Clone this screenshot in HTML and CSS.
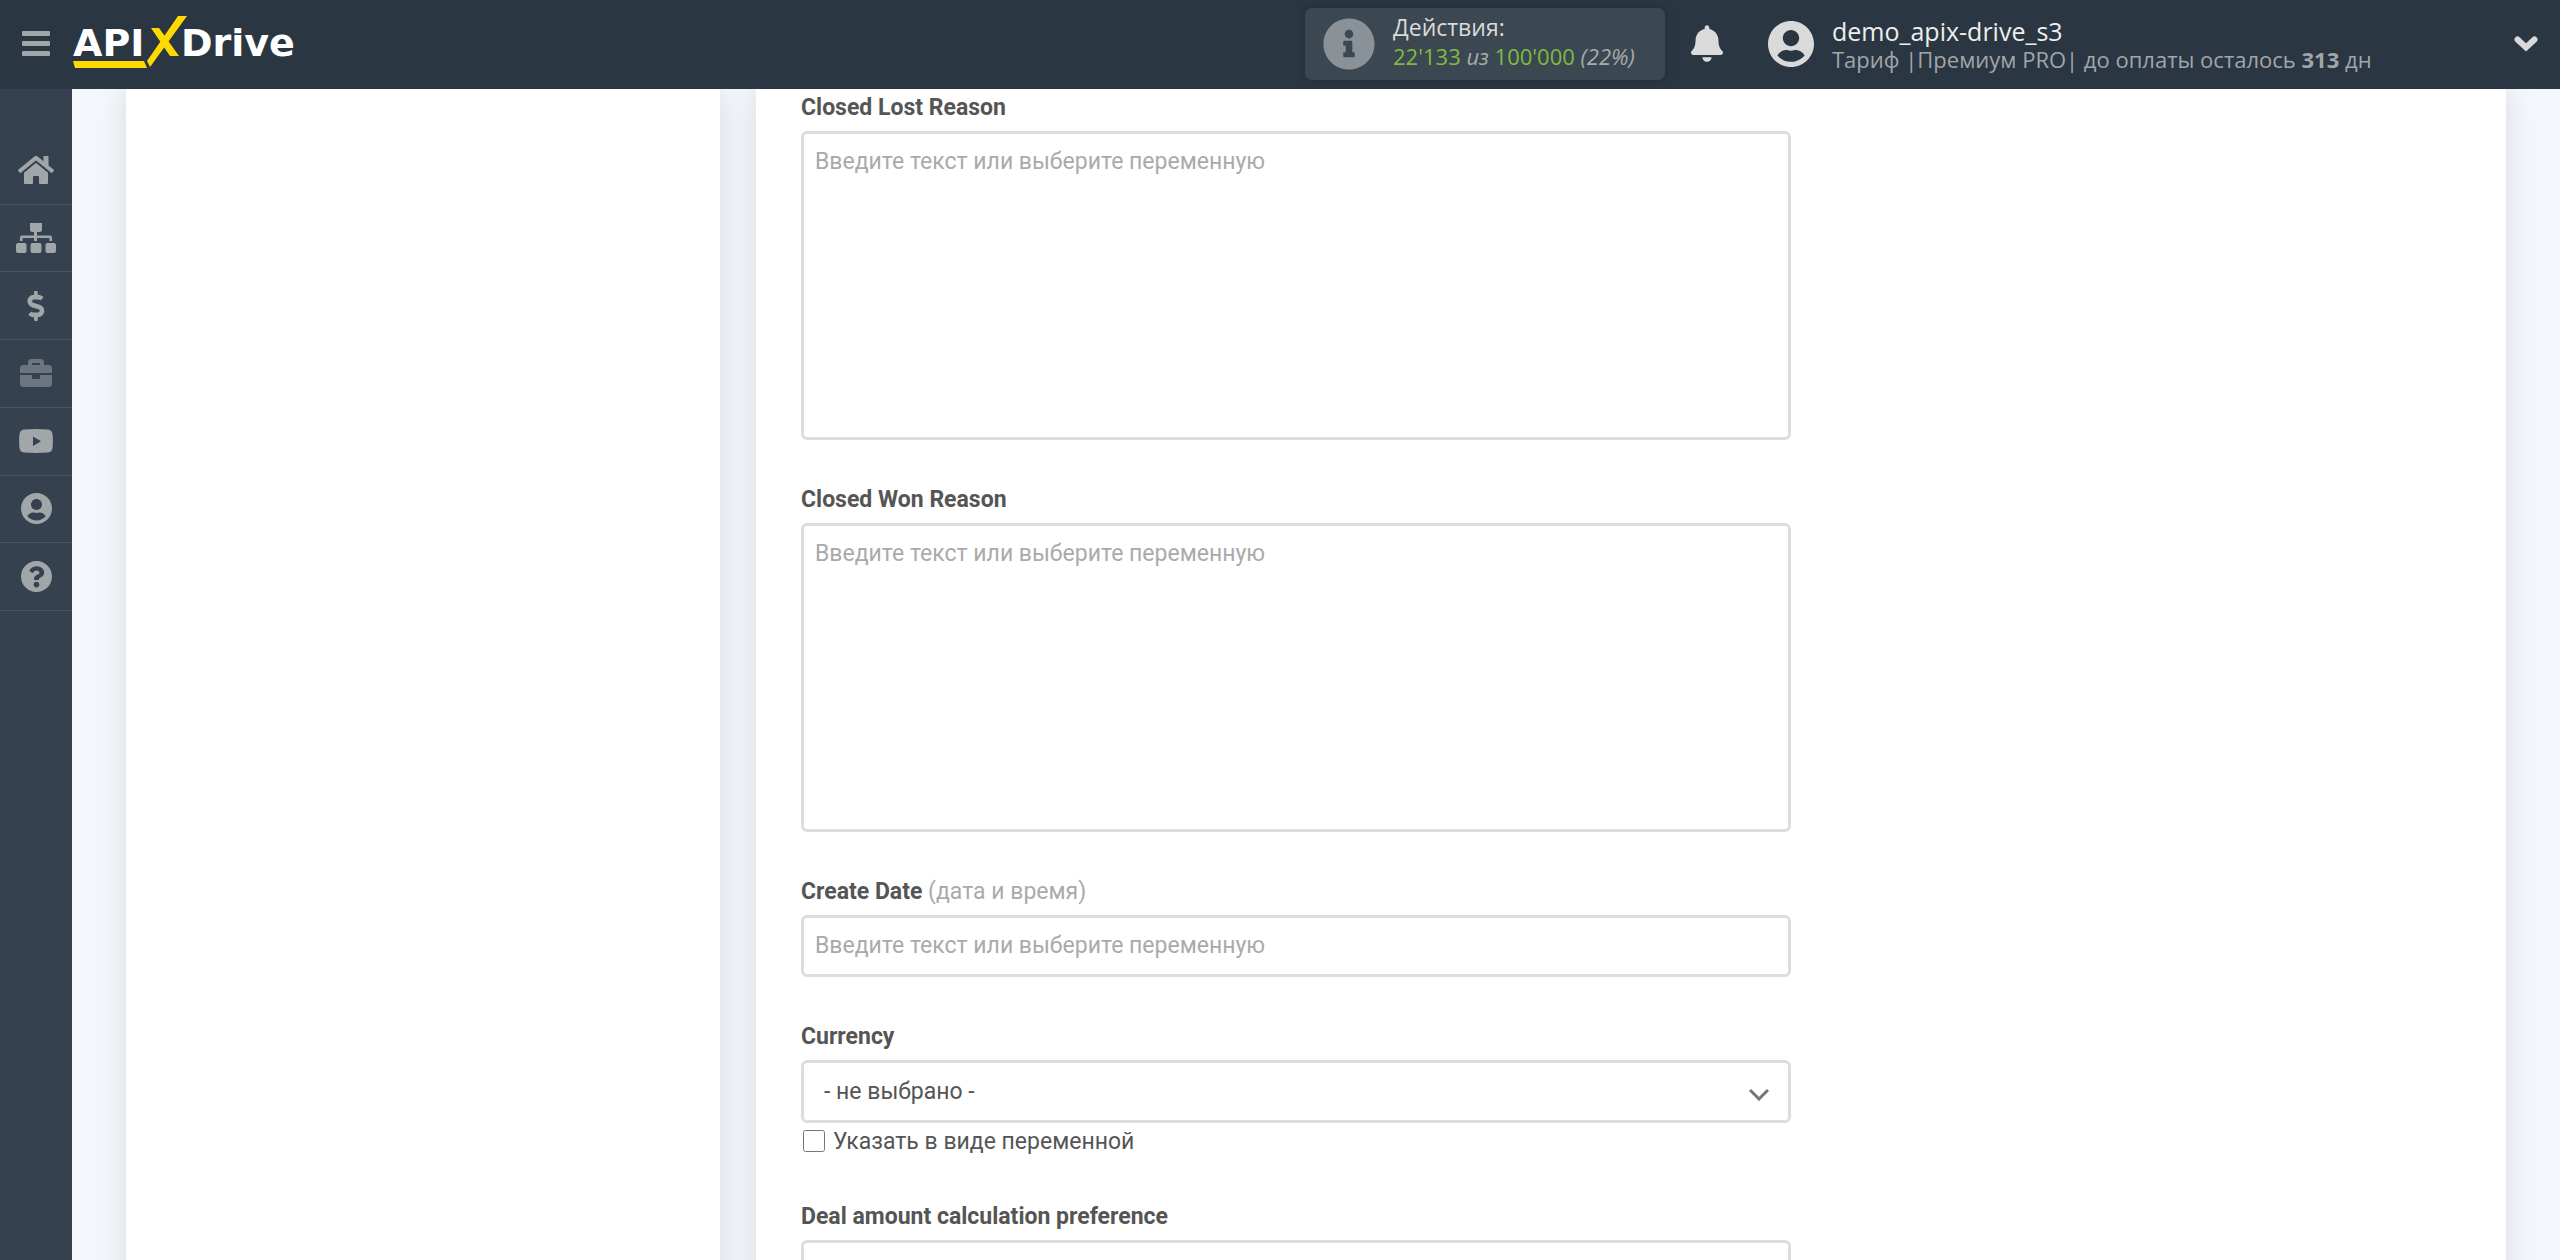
FILE: index.html
```html
<!DOCTYPE html>
<html lang="ru">
<head>
  <meta charset="utf-8">
  <meta name="viewport" content="width=device-width, initial-scale=1">
  <title>APIXDrive</title>
  <link rel="stylesheet" href="styles.css">
</head>
<body>
  <header class="header">
    <button class="menu-toggle" type="button" aria-label="Меню">
      <svg width="28" height="25" viewBox="0 0 28 25"><rect width="28" height="5" rx="1"/><rect y="10" width="28" height="5" rx="1"/><rect y="20" width="28" height="5" rx="1"/></svg>
    </button>
    <a class="logo" href="#" aria-label="APIXDrive">
      <svg width="228" height="56" viewBox="72 14 228 56">
        <g class="logo-text"><text x="73" y="56">API</text><text x="181" y="56">Drive</text></g>
        <path class="logo-mark" d="M178 16h9l-37 51-3-6zM151 28h8l20 28h-9zM73 61h71l3 7H75z"/>
      </svg>
    </a>
    <div class="header-right">
      <div class="usage">
        <svg class="usage-icon" width="52" height="52" viewBox="4 4 504 504"><path d="M256 8C119.043 8 8 119.083 8 256c0 136.997 111.043 248 248 248s248-111.003 248-248C504 119.083 392.957 8 256 8zm0 110c23.196 0 42 18.804 42 42s-18.804 42-42 42-42-18.804-42-42 18.804-42 42-42zm56 254c0 6.627-5.373 12-12 12h-88c-6.627 0-12-5.373-12-12v-24c0-6.627 5.373-12 12-12h12v-64h-12c-6.627 0-12-5.373-12-12v-24c0-6.627 5.373-12 12-12h64c6.627 0 12 5.373 12 12v100h12c6.627 0 12 5.373 12 12v24z"/></svg>
        <div class="usage-text">
          <div class="usage-title">Действия:</div>
          <div><span class="count">22'133</span> <i>из</i> <span class="count">100'000</span> <i>(22%)</i></div>
        </div>
      </div>
      <button class="bell" type="button" aria-label="Уведомления">
        <svg width="32" height="37" viewBox="0 0 448 512"><path d="M224 512c35.32 0 63.97-28.65 63.97-64H160.03c0 35.35 28.65 64 63.97 64zm215.39-149.71c-19.32-20.76-55.47-51.99-55.47-154.29 0-77.7-54.48-139.9-127.94-155.16V32c0-17.67-14.32-32-31.98-32s-31.98 14.33-31.98 32v20.84C118.56 68.1 64.08 130.3 64.08 208c0 102.3-36.15 133.53-55.47 154.29-6 6.45-8.66 14.16-8.61 21.71.11 16.4 12.98 32 32.1 32h383.8c19.12 0 32-15.6 32.1-32 .05-7.55-2.61-15.27-8.61-21.71z"/></svg>
      </button>
      <button class="account" type="button">
        <svg width="46" height="46" viewBox="0 8 496 496"><path d="M248 8C111 8 0 119 0 256s111 248 248 248 248-111 248-248S385 8 248 8zm0 96c48.600 0 88 39.400 88 88s-39.400 88-88 88-88-39.400-88-88 39.400-88 88-88zm0 344c-58.700 0-111.300-26.600-146.500-68.200 18.800-35.400 55.600-59.800 98.500-59.800 2.400 0 4.800.4 7.100 1.100 13 4.200 26.600 6.900 40.900 6.900 14.300 0 28-2.700 40.900-6.900 2.300-.7 4.700-1.100 7.100-1.100 42.900 0 79.700 24.400 98.500 59.800C359.300 421.400 306.700 448 248 448z"/></svg>
        <span class="account-text">
          <span class="account-name">demo_apix-drive_s3</span>
          <span class="account-plan">Тариф |Премиум PRO| до оплаты осталось <b>313</b> дн</span>
        </span>
        <svg class="account-arrow" width="24" height="16" viewBox="0 0 24 16"><path d="M3.500 3.500l8.500 8 8.500-8"/></svg>
      </button>
    </div>
  </header>
  <div class="body">
    <div class="sidebar">
      <nav class="sidebar-nav" aria-label="Разделы">
        <a href="#" aria-label="Главная"><svg width="36" height="28" viewBox="0 32 576 448"><path d="M280.370 148.260L96 300.110V464a16 16 0 0 0 16 16l112.060-.29a16 16 0 0 0 15.920-16V368a16 16 0 0 1 16-16h64a16 16 0 0 1 16 16v95.640a16 16 0 0 0 16 16.050L464 480a16 16 0 0 0 16-16V300L295.670 148.260a12.190 12.190 0 0 0-15.300 0zM571.600 251.470L488 182.560V44.050a12 12 0 0 0-12-12h-56a12 12 0 0 0-12 12v72.610L318.470 43a48 48 0 0 0-61 0L4.340 251.470a12 12 0 0 0-1.600 16.900l25.500 31A12 12 0 0 0 45.150 301l235.220-193.740a12.190 12.190 0 0 1 15.300 0L530.900 301a12 12 0 0 0 16.900-1.600l25.500-31a12 12 0 0 0-1.700-16.930z"/></svg></a>
        <a href="#" aria-label="Связи"><svg width="40" height="30" viewBox="0 0 40 30"><path d="M14 0h12v6.500a2.500 2.500 0 0 1-2.500 2.500H21v3.500h13a2 2 0 0 1 2 2V18h-2.500v-3H21v3h-3v-3H6.500v3H4v-3.500a2 2 0 0 1 2-2h12V9h-1.500A2.500 2.500 0 0 1 14 6.500z"/><rect y="20" width="10.500" height="10" rx="2"/><rect x="14.500" y="20" width="11" height="10" rx="2"/><rect x="29.500" y="20" width="10.500" height="10" rx="2"/></svg></a>
        <a href="#" aria-label="Тарифы"><svg width="18" height="30" viewBox="0 0 292 512"><path d="M209.200 233.400l-108-31.600C88.700 198.200 80 186.500 80 173.500c0-16.300 13.200-29.500 29.500-29.500h66.300c12.200 0 24.200 3.700 34.200 10.500 6.100 4.100 14.300 3.100 19.500-2l34.800-34c7.100-6.900 6.100-18.400-1.800-24.500C238 74.800 207.400 64.100 176 64V16c0-8.800-7.200-16-16-16h-32c-8.800 0-16 7.200-16 16v48h-2.500C45.800 64-5.400 118.700.5 183.600c4.200 46.100 39.400 83.600 83.800 96.600l102.500 30c12.500 3.700 21.200 15.300 21.200 28.300 0 16.300-13.200 29.500-29.500 29.500h-66.300C100 368 88 364.300 78 357.500c-6.100-4.100-14.300-3.100-19.500 2l-34.800 34c-7.100 6.900-6.100 18.400 1.800 24.500 24.500 19.200 55.100 29.900 86.500 30v48c0 8.800 7.200 16 16 16h32c8.800 0 16-7.200 16-16v-48.200c46.600-.9 90.300-28.600 105.700-72.700 21.500-61.600-14.600-124.800-72.500-141.700z"/></svg></a>
        <a class="dim" href="#" aria-label="Портфель"><svg width="32" height="28" viewBox="0 32 512 448"><path d="M320 336c0 8.840-7.160 16-16 16h-96c-8.840 0-16-7.160-16-16v-48H0v144c0 25.600 22.400 48 48 48h416c25.600 0 48-22.400 48-48V288H320v48zm144-208h-80V80c0-25.600-22.400-48-48-48H176c-25.600 0-48 22.400-48 48v48H48c-25.600 0-48 22.400-48 48v80h512v-80c0-25.600-22.400-48-48-48zm-144 0H192V96h128v32z"/></svg></a>
        <a href="#" aria-label="Видео"><svg width="34" height="24" viewBox="0 0 34 24"><path fill-rule="evenodd" d="M5 .5Q17-.5 29 .5Q33 1 33.500 5Q34.300 12 33.500 19Q33 23 29 23.500Q17 24.300 5 23.500Q1 23 .5 19Q-.3 12 .5 5Q1 1 5 .5zM14 7.500v9.500l8-4.750z"/></svg></a>
        <a href="#" aria-label="Профиль"><svg width="31" height="31" viewBox="0 8 496 496"><path d="M248 8C111 8 0 119 0 256s111 248 248 248 248-111 248-248S385 8 248 8zm0 96c48.600 0 88 39.400 88 88s-39.400 88-88 88-88-39.400-88-88 39.400-88 88-88zm0 344c-58.700 0-111.300-26.600-146.500-68.200 18.800-35.400 55.600-59.800 98.500-59.800 2.400 0 4.800.4 7.100 1.100 13 4.200 26.600 6.900 40.900 6.900 14.300 0 28-2.700 40.900-6.900 2.300-.7 4.700-1.100 7.100-1.100 42.900 0 79.700 24.400 98.500 59.800C359.300 421.400 306.700 448 248 448z"/></svg></a>
        <a href="#" aria-label="Помощь"><svg width="31" height="31" viewBox="8 8 496 496"><path d="M504 256c0 136.997-111.043 248-248 248S8 392.997 8 256C8 119.083 119.043 8 256 8s248 111.083 248 248zM262.655 90c-54.497 0-89.255 22.957-116.549 63.758-3.536 5.286-2.353 12.415 2.715 16.258l34.699 26.310c5.205 3.947 12.621 3.008 16.665-2.122 17.864-22.658 30.113-35.797 57.303-35.797 20.429 0 45.698 13.148 45.698 32.958 0 14.976-12.363 22.667-32.534 33.976C247.128 238.528 216 254.941 216 296v4c0 6.627 5.373 12 12 12h56c6.627 0 12-5.373 12-12v-1.333c0-28.462 83.186-29.647 83.186-106.667 0-58.002-60.165-102-116.531-102zM256 338c-25.365 0-46 20.635-46 46 0 25.364 20.635 46 46 46s46-20.636 46-46c0-25.364-20.635-46-46-46z"/></svg></a>
      </nav>
    </div>
    <main class="content">
      <aside class="panel"></aside>
      <form class="panel form">
        <div class="field">
          <label for="lost">Closed Lost Reason</label>
          <textarea class="control" id="lost" placeholder="Введите текст или выберите переменную"></textarea>
        </div>
        <div class="field">
          <label for="won">Closed Won Reason</label>
          <textarea class="control" id="won" placeholder="Введите текст или выберите переменную"></textarea>
        </div>
        <div class="field">
          <label for="created">Create Date <span class="hint">(дата и время)</span></label>
          <input class="control" id="created" type="text" placeholder="Введите текст или выберите переменную">
        </div>
        <div class="field">
          <label for="currency">Currency</label>
          <div class="select">
            <select class="control" id="currency"><option>- не выбрано -</option></select>
            <svg width="20" height="12" viewBox="0 0 20 12"><path d="M1 1l9 9 9-9"/></svg>
          </div>
          <label class="check"><input type="checkbox">Указать в виде переменной</label>
        </div>
        <div class="field">
          <label for="amount">Deal amount calculation preference</label>
          <div class="select">
            <select class="control" id="amount"><option>- не выбрано -</option></select>
            <svg width="20" height="12" viewBox="0 0 20 12"><path d="M1 1l9 9 9-9"/></svg>
          </div>
        </div>
      </form>
    </main>
  </div>
</body>
</html>
```
FILE: styles.css
```css
* { box-sizing: border-box; }

body {
  margin: 0;
  height: 100vh;
  display: flex;
  flex-direction: column;
  background: #f4f7fc;
  color: #555;
  font: 23px/32px Roboto, "Liberation Sans", sans-serif;
}

button {
  padding: 0;
  border: 0;
  background: none;
  color: inherit;
  font: inherit;
  text-align: left;
  cursor: pointer;
}

svg { display: block; flex: none; fill: currentColor; }

/* Header */
.header {
  flex: none;
  display: flex;
  align-items: center;
  height: 89px;
  padding: 0 22px 2px;
  background: #2b3643;
  color: #dadada;
  font: 22px/29px "Open Sans", "Noto Sans", sans-serif;
}

.menu-toggle { color: #a1a6a9; margin-right: 22px; }
.logo { margin-top: -3px; }
.logo-text { fill: #fff; font: 700 38px "DejaVu Sans", sans-serif; }
.logo-mark { fill: #ffd900; }

.header-right { display: flex; align-items: center; margin-left: auto; }

.usage {
  display: flex;
  align-items: center;
  gap: 18px;
  width: 360px;
  height: 72px;
  padding-left: 18px;
  border-radius: 7px;
  background: #3b4851;
  box-shadow: 0 0 8px rgba(0, 0, 0, .15);
}

.usage-icon { color: #8a9197; }
.usage-text { padding-bottom: 4px; color: #aaa; white-space: nowrap; }
.usage-title { color: #dadada; font-size: 23px; }
.count { color: #7fba45; }
.bell { margin: 0 45px 0 26px; }

.account { display: flex; align-items: center; width: 770px; }
.account-text { flex: 1; padding-top: 3px; margin-left: 18px; white-space: nowrap; }
.account-name, .account-plan { display: block; }
.account-name { color: #eee; font-size: 25px; line-height: 28px; }
.account-plan { color: #a1a6a9; }
.account-arrow { fill: none; stroke: #dadada; stroke-width: 6; stroke-linecap: round; }

.body { flex: 1; min-height: 0; display: flex; }

/* Icon sidebar */
.sidebar {
  flex: none;
  width: 72px;
  padding-top: 48px;
  background: #364150;
}

.sidebar-nav {
  display: grid;
  grid-auto-rows: 1fr;
  height: 474px;
}

.sidebar a {
  display: flex;
  align-items: center;
  justify-content: center;
  border-bottom: 1px solid #485563;
  color: #a1a6a9;
}

.sidebar .dim { color: #6c757e; }

/* Panels */
.content {
  flex: 1;
  min-width: 0;
  display: grid;
  grid-template-columns: 594fr 1750fr;
  gap: 36px;
  padding: 0 54px;
  overflow-y: auto;
  scrollbar-width: none;
}

.panel {
  background: #fff;
  box-shadow: 0 0 30px rgba(0, 0, 0, .12);
}

/* Form */
.form {
  display: flex;
  flex-direction: column;
  gap: 44px;
  padding: 3px 45px 45px;
}

.field { display: flex; flex-direction: column; width: 990px; max-width: 100%; }
.field > label:first-child { margin-bottom: 7px; font-weight: 700; }
.field .hint { color: #aaa; font-weight: 400; }

.control {
  width: 100%;
  height: 62px;
  margin: 0;
  padding: 0 11px 2px;
  border: 3px solid #ddd;
  border-radius: 6px;
  background: #fff;
  color: #555;
  font: inherit;
}

.control::placeholder { color: #aaa; opacity: 1; }
textarea.control { display: block; height: 309px; padding: 12px 11px; resize: none; }
select.control { height: 63px; padding: 1px 20px 0; appearance: none; }

.select { position: relative; }

.select svg {
  position: absolute;
  right: 22px;
  top: 29px;
  fill: none;
  stroke: #777;
  stroke-width: 3;
  pointer-events: none;
}

.check { display: flex; align-items: center; gap: 8px; height: 34px; padding-top: 3px; }
.check input { width: 22px; height: 22px; margin: 0 0 2px 2px; }
```
